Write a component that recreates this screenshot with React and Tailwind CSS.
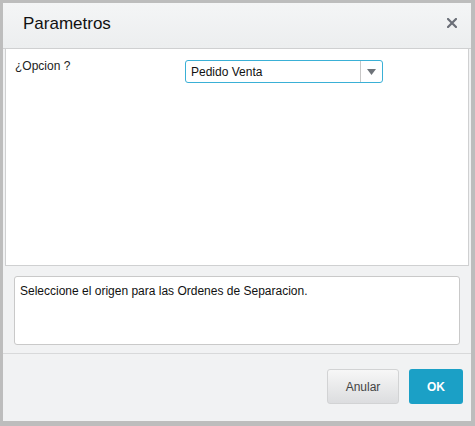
import React from 'react';

// Parameter dialog: one option picker plus a help box and action buttons
export default function App() {
  return (
    <div className="w-[475px] h-[426px] bg-[#bdbdbd] pt-[3px] pl-[3px] pr-[4px] pb-[5px] font-['Liberation_Sans',Arial,sans-serif]">
      <div className="h-full flex flex-col bg-[#f1f2f3]">
        {/* Title bar */}
        <div className="h-[46px] flex items-center justify-between pl-[20px] pr-[14px] bg-gradient-to-b from-[#f4f5f6] to-[#eceeef] border-b border-[#cfd0d1]">
          <span className="text-[17px] text-[#111] -mt-[4px]">Parametros</span>
          <svg width="10" height="10" viewBox="0 0 10 10" className="-mt-[6px]">
            <path d="M1 1L9 9M9 1L1 9" stroke="#6b6f78" strokeWidth="2.2" strokeLinecap="square" />
          </svg>
        </div>

        {/* Form body */}
        <div className="mx-[2px] h-[217px] bg-white border-x border-b border-[#cfd0d1] flex items-start pt-[9px] pl-[9px]">
          <span className="w-[170px] -mt-[1px] text-[12px] text-[#222]">¿Opcion ?</span>
          <div className="mt-[2px] w-[198px] h-[23px] flex items-stretch rounded-[3px] border border-[#3ab0d6] bg-white">
            <span className="flex-1 flex items-center pl-[5px] text-[12px] text-[#111]">Pedido Venta</span>
            <div className="w-[22px] flex items-center justify-center border-l border-[#c7c7c7]">
              <svg width="9" height="6" viewBox="0 0 9 6">
                <path d="M0 0H9L4.5 6Z" fill="#6e7379" />
              </svg>
            </div>
          </div>
        </div>

        {/* Help text */}
        <div className="px-[11px] pt-[10px]">
          <div className="h-[69px] rounded-[3px] border border-[#c9c9c9] bg-white px-[5px] pt-[5px] text-[12px] text-[#111]">
            Seleccione el origen para las Ordenes de Separacion.
          </div>
        </div>

        {/* Footer */}
        <div className="mt-[8px] flex-1 border-t border-[#d8d9da] flex items-start justify-end gap-[10px] pt-[15px] pr-[8px]">
          <button className="w-[72px] h-[35px] rounded-[3px] border border-[#d2d3d4] bg-gradient-to-b from-[#f7f7f7] to-[#dcdddf] text-[12px] text-[#444]">
            Anular
          </button>
          <button className="w-[54px] h-[35px] rounded-[3px] bg-[#1ba0c6] text-[12px] font-bold text-white">
            OK
          </button>
        </div>
      </div>
    </div>
  );
}
